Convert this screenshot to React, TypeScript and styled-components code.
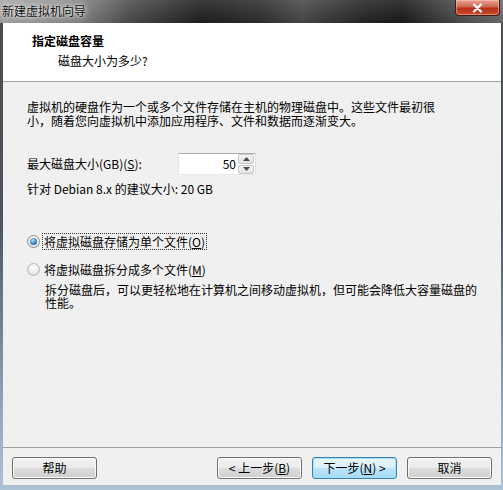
import React from "react";
import styled, { createGlobalStyle } from "styled-components";

const GlobalStyle = createGlobalStyle`
  html, body {
    margin: 0;
    padding: 0;
    background: #ffffff;
  }
  body {
    font-family: "Noto Sans CJK SC", "Noto Sans", sans-serif;
    font-size: 12px;
    color: #000;
  }
`;

const Window = styled.div`
  width: 503px;
  height: 490px;
  display: flex;
  flex-direction: column;
  background: linear-gradient(to bottom, #4a4a4a 0%, #4c5560 45%, #93a9c0 85%, #aec2d6 100%);
  overflow: hidden;
`;

const TitleBar = styled.div`
  height: 23px;
  flex-shrink: 0;
  display: flex;
  justify-content: space-between;
  align-items: flex-start;
  background:
    linear-gradient(to bottom, rgba(255, 255, 255, 0.12), rgba(0, 0, 0, 0.05)),
    linear-gradient(90deg, #a6a6a6 0%, #8c8c8c 14%, #4a4a4a 26%, #1e1e1e 40%, #2e2e2e 52%, #474747 60%, #262626 72%, #1a1a1a 80%, #4e4e4e 92%, #6a6a6a 100%);
`;

const Caption = styled.span`
  margin: 3px 0 0 2px;
  font-size: 12px;
  line-height: 15px;
  color: #111;
  text-shadow: 0 0 6px rgba(255, 255, 255, 0.9), 0 0 3px rgba(255, 255, 255, 0.9);
`;

const CloseButton = styled.div`
  width: 45px;
  height: 16px;
  margin-right: 3px;
  box-sizing: border-box;
  display: flex;
  align-items: center;
  justify-content: center;
  border: 1px solid #3a1e1a;
  border-top: none;
  border-radius: 0 0 4px 4px;
  background: linear-gradient(to bottom, #e8a493 0%, #d0664f 45%, #b8301a 55%, #c84a2c 100%);
  box-shadow: inset 0 0 0 1px rgba(255, 200, 190, 0.5);
`;

const Client = styled.div`
  flex: 1;
  margin: 0 2px 5px 3px;
  display: flex;
  flex-direction: column;
  background: #f0f0f0;
`;

const Header = styled.div`
  height: 59px;
  flex-shrink: 0;
  box-sizing: border-box;
  background: #ffffff;
  border-bottom: 1px solid #a0a0a0;
  padding: 11px 0 0 29px;
  display: flex;
  flex-direction: column;
`;

const HeaderTitle = styled.div`
  font-weight: bold;
  line-height: 14px;
  height: 14px;
`;

const HeaderSub = styled.div`
  margin: 6px 0 0 26px;
  line-height: 14px;
`;

const Body = styled.div`
  flex: 1;
  padding: 18px 0 0 24px;
  display: flex;
  flex-direction: column;
`;

const Para = styled.p`
  margin: 0;
  line-height: 14px;
`;

const SizeRow = styled.div`
  margin-top: 25px;
  display: flex;
  align-items: center;
  height: 22px;
`;

const SizeLabel = styled.span`
  width: 151px;
  line-height: 14px;
`;

const Spinner = styled.div`
  width: 78px;
  height: 22px;
  box-sizing: border-box;
  display: flex;
  background: #ffffff;
  border: 1px solid #e2e3ea;
  border-top-color: #abadb3;
  border-bottom-color: #e3e9ef;
`;

const SpinValue = styled.span`
  flex: 1;
  text-align: right;
  padding-right: 2px;
  line-height: 20px;
  font-size: 12px;
`;

const SpinButtons = styled.div`
  width: 16px;
  display: flex;
  flex-direction: column;
  gap: 1px;
  padding: 0 1px 0 0;
`;

const SpinPart = styled.div`
  flex: 1;
  display: flex;
  align-items: center;
  justify-content: center;
  border: 1px solid #c9c9c9;
  border-radius: 2px;
  background: linear-gradient(to bottom, #f6f6f6, #e2e2e2);
`;

const Hint = styled.div`
  margin-top: 7px;
  line-height: 14px;
`;

const Options = styled.div`
  margin-top: 37px;
  display: flex;
  flex-direction: column;
  gap: 12px;
`;

const OptionRow = styled.div`
  display: flex;
  align-items: center;
  height: 16px;
`;

const Radio = styled.span<{ checked?: boolean }>`
  position: relative;
  width: 13px;
  height: 13px;
  box-sizing: border-box;
  border-radius: 50%;
  border: 1px solid ${({ checked }) => (checked ? "#8a8f96" : "#b4b4b4")};
  background: radial-gradient(circle at 50% 35%, #ffffff 0%, #ececec 55%, #cfcfcf 100%);
  flex-shrink: 0;

  &::after {
    content: "";
    display: ${({ checked }) => (checked ? "block" : "none")};
    position: absolute;
    left: 2px;
    top: 2px;
    width: 7px;
    height: 7px;
    border-radius: 50%;
    background: radial-gradient(circle at 40% 35%, #b8e4ff 0%, #3d86c6 50%, #1b4f86 100%);
  }
`;

const OptionLabel = styled.span<{ focused?: boolean }>`
  margin-left: 3px;
  padding: 0 1px;
  line-height: 15px;
  outline: ${({ focused }) => (focused ? "1px dotted #333" : "none")};
`;

const Desc = styled.p`
  margin: 6px 0 0 18px;
  line-height: 13px;
`;

const Footer = styled.div`
  height: 38px;
  flex-shrink: 0;
  box-sizing: border-box;
  border-top: 1px solid #a0a0a0;
  padding: 9px 9px 0 9px;
  display: flex;
  align-items: flex-start;
`;

const Spacer = styled.div`
  flex: 1;
`;

const Button = styled.div<{ primary?: boolean; gapLeft?: number }>`
  width: 85px;
  height: 22px;
  box-sizing: border-box;
  margin-left: ${({ gapLeft }) => gapLeft ?? 0}px;
  display: flex;
  align-items: center;
  justify-content: center;
  border-radius: 3px;
  border: 1px solid ${({ primary }) => (primary ? "#3c7fb1" : "#707070")};
  background: ${({ primary }) =>
    primary
      ? "linear-gradient(to bottom, #eaf6fd 0%, #d9f0fc 50%, #bee6fd 50%, #a7d9f5 100%)"
      : "linear-gradient(to bottom, #f2f2f2 0%, #ebebeb 50%, #dddddd 50%, #cfcfcf 100%)"};
  box-shadow: inset 0 0 0 1px ${({ primary }) => (primary ? "#9ee3ff" : "#fcfcfc")};
  line-height: 14px;
`;

const U = styled.span`
  text-decoration: underline;
`;

export default function App() {
  return (
    <>
      <GlobalStyle />
      <Window>
        <TitleBar>
          <Caption>新建虚拟机向导</Caption>
          <CloseButton>
            <svg width="11" height="10" viewBox="0 0 11 10">
              <path d="M2 1.5 L9 8.5 M9 1.5 L2 8.5" stroke="#ffffff" strokeWidth="2.2" strokeLinecap="round" />
            </svg>
          </CloseButton>
        </TitleBar>
        <Client>
          <Header>
            <HeaderTitle>指定磁盘容量</HeaderTitle>
            <HeaderSub>磁盘大小为多少?</HeaderSub>
          </Header>
          <Body>
            <Para>
              虚拟机的硬盘作为一个或多个文件存储在主机的物理磁盘中。这些文件最初很
              <br />
              小，随着您向虚拟机中添加应用程序、文件和数据而逐渐变大。
            </Para>
            <SizeRow>
              <SizeLabel>
                最大磁盘大小(GB)(<U>S</U>):
              </SizeLabel>
              <Spinner>
                <SpinValue>50</SpinValue>
                <SpinButtons>
                  <SpinPart>
                    <svg width="7" height="4" viewBox="0 0 7 4">
                      <path d="M0 4 L3.5 0 L7 4 Z" fill="#4a4a4a" />
                    </svg>
                  </SpinPart>
                  <SpinPart>
                    <svg width="7" height="4" viewBox="0 0 7 4">
                      <path d="M0 0 L3.5 4 L7 0 Z" fill="#4a4a4a" />
                    </svg>
                  </SpinPart>
                </SpinButtons>
              </Spinner>
            </SizeRow>
            <Hint>针对 Debian 8.x 的建议大小: 20 GB</Hint>
            <Options>
              <OptionRow>
                <Radio checked />
                <OptionLabel focused>
                  将虚拟磁盘存储为单个文件(<U>O</U>)
                </OptionLabel>
              </OptionRow>
              <OptionRow>
                <Radio />
                <OptionLabel>
                  将虚拟磁盘拆分成多个文件(<U>M</U>)
                </OptionLabel>
              </OptionRow>
            </Options>
            <Desc>
              拆分磁盘后，可以更轻松地在计算机之间移动虚拟机，但可能会降低大容量磁盘的
              <br />
              性能。
            </Desc>
          </Body>
          <Footer>
            <Button>帮助</Button>
            <Spacer />
            <Button>
              &lt; 上一步(<U>B</U>)
            </Button>
            <Button primary gapLeft={10}>
              下一步(<U>N</U>) &gt;
            </Button>
            <Button gapLeft={10}>取消</Button>
          </Footer>
        </Client>
      </Window>
    </>
  );
}
